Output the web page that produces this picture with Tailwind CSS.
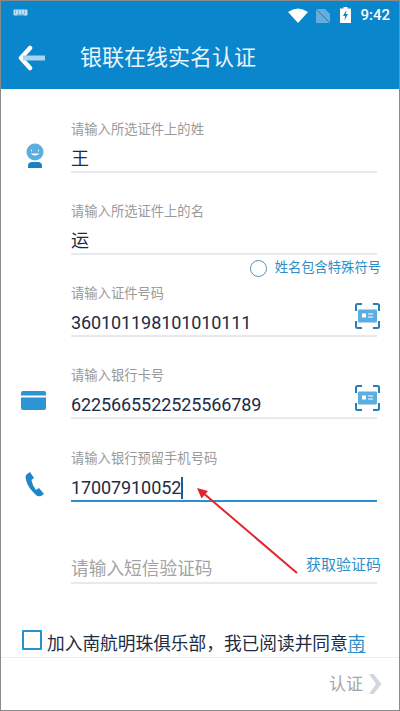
<!DOCTYPE html>
<html lang="zh">
<head>
  <meta charset="UTF-8" />
  <title>银联在线实名认证</title>
  <script src="https://cdn.jsdelivr.net/npm/@tailwindcss/browser@4"></script>
</head>
<body class="m-0 bg-white">
  <div class="relative w-[400px] h-[711px] overflow-hidden flex flex-col border border-[#8a8a8a] bg-white font-['Roboto','Noto_Sans_CJK_SC',sans-serif]">

    <!-- status bar + title -->
    <div class="h-[88px] shrink-0 bg-[#0a86cc] text-white">
      <div class="h-[28px] flex items-center pl-[12px] pr-[9px]">
        <svg width="16" height="8" viewBox="0 0 16 8" class="mt-[-4px]"><rect x="0.5" y="0.5" width="14" height="6" rx="1" fill="#bfe0f3"/><path d="M2 2h1M5 2h1M8 2h1M11 2h1M2 4h1M5 4h1M8 4h1M11 4h1M4 6h7" stroke="#0a86cc" stroke-width="0.8"/></svg>
        <div class="flex-1"></div>
        <svg width="20" height="15" viewBox="0 0 20 15"><path d="M0 4Q10 -3 20 4L10 15Z" fill="#fff"/></svg>
        <svg width="14" height="15" viewBox="0 0 14 15" class="ml-[8px]"><path d="M0 1h9l5 5v9H0Z" fill="#63aedd"/><path d="M0 1l14 14" stroke="#0a86cc" stroke-width="1"/></svg>
        <svg width="11" height="16" viewBox="0 0 11 16" class="ml-[10px]"><path d="M3.500 0h4v1.500H11V16H0V1.500h3.500Z" fill="#fff"/><path d="M6.500 3L3 9h2.200L4.500 13.500 8 7H5.800Z" fill="#0a86cc"/></svg>
        <span class="ml-[9px] text-[15px] font-medium leading-none">9:42</span>
      </div>
      <div class="h-[60px] flex items-center">
        <svg width="28" height="26" viewBox="0 0 28 26" class="ml-[17px] mt-[-3px]"><path d="M12 3L3 13l9 10" fill="none" stroke="#fff" stroke-width="4.500" stroke-linecap="round" stroke-linejoin="round"/><path d="M5 13h22" stroke="#a9d3ee" stroke-width="5"/></svg>
        <span class="ml-[34px] mt-[-2px] text-[22px] leading-none text-[#eaf5fc]">银联在线实名认证</span>
      </div>
    </div>

    <!-- form -->
    <div class="flex-1 pl-[70px] pr-[22px] pt-[2px] text-[#1c2c44]">
      <div class="h-[82px] flex flex-col justify-end border-b-2 border-[#e6e9ed] relative">
        <svg width="20" height="26" viewBox="0 0 20 26" class="absolute left-[-46px] top-[52px]"><circle cx="10" cy="9" r="8.500" fill="#5aaee0"/><path d="M6 7.500h1M13 7.500h1" stroke="#fff" stroke-width="1.500"/><path d="M5.500 10.500q4.500 4 9 0" fill="#fff"/><path d="M3 23q0-4 4-4h6q4 0 4 4v2H3Z" fill="#1a82c4"/></svg>
        <p class="text-[13.3px] leading-[18px] text-[#9a9a9a]">请输入所选证件上的姓</p>
        <p class="mt-[8px] text-[18px] leading-[24px]">王</p>
      </div>
      <div class="h-[82px] flex flex-col justify-end border-b-2 border-[#e6e9ed]">
        <p class="text-[13.3px] leading-[18px] text-[#9a9a9a]">请输入所选证件上的名</p>
        <p class="mt-[8px] text-[18px] leading-[24px]">运</p>
      </div>
      <div class="h-[82px] flex flex-col justify-end border-b-2 border-[#e6e9ed] relative">
        <div class="absolute right-[-4px] top-[4px] flex items-center gap-[8px]">
          <span class="w-[17px] h-[17px] rounded-full border border-[#4d93b8]"></span>
          <span class="text-[13.3px] leading-[18px] text-[#2c8fc9]">姓名包含特殊符号</span>
        </div>
        <svg width="25" height="26" viewBox="0 0 25 26" class="absolute right-[-3px] top-[48px]"><path d="M1 8V2.500Q1 1 2.500 1H7M18 1h4.500Q24 1 24 2.500V8M1 18v5.500Q1 25 2.500 25H7M18 25h4.500q1.500 0 1.500-1.500V18" fill="none" stroke="#2580b8" stroke-width="2"/><rect x="3" y="6.500" width="19" height="13" rx="1" fill="#5aaee0"/><rect x="7" y="10.500" width="4" height="4" fill="#fff"/><path d="M13 11h5M13 14h5" stroke="#fff" stroke-width="1.200"/></svg>
        <p class="text-[13.3px] leading-[18px] text-[#9a9a9a]">请输入证件号码</p>
        <p class="mt-[8px] text-[18px] leading-[24px] tracking-[-0.1px]">360101198101010111</p>
      </div>
      <div class="h-[82px] flex flex-col justify-end border-b-2 border-[#e6e9ed] relative">
        <svg width="25" height="20" viewBox="0 0 25 20" class="absolute left-[-50px] top-[54px]"><rect width="25" height="19" rx="2" fill="#2d94d6"/><rect y="4.500" width="25" height="2" fill="#fff"/></svg>
        <svg width="25" height="26" viewBox="0 0 25 26" class="absolute right-[-3px] top-[48px]"><path d="M1 8V2.500Q1 1 2.500 1H7M18 1h4.500Q24 1 24 2.500V8M1 18v5.500Q1 25 2.500 25H7M18 25h4.500q1.500 0 1.500-1.500V18" fill="none" stroke="#2580b8" stroke-width="2"/><rect x="3" y="6.500" width="19" height="13" rx="1" fill="#5aaee0"/><rect x="7" y="10.500" width="4" height="4" fill="#fff"/><path d="M13 11h5M13 14h5" stroke="#fff" stroke-width="1.200"/></svg>
        <p class="text-[13.3px] leading-[18px] text-[#9a9a9a]">请输入银行卡号</p>
        <p class="mt-[8px] text-[18px] leading-[24px] tracking-[-0.1px]">6225665522525566789</p>
      </div>
      <div class="h-[83px] flex flex-col justify-end border-b-2 border-[#2a8fd0] relative">
        <svg width="20" height="26" viewBox="0 0 20 26" class="absolute left-[-46px] top-[52px]"><path d="M5 1L1.500 3.500Q0 5 1 9q2 8 10 15 2 2 5 1l3-2-5-6-3 2Q7 14 6.500 9l2.500-2Z" fill="#1f87c8"/></svg>
        <p class="text-[13.3px] leading-[18px] text-[#9a9a9a]">请输入银行预留手机号码</p>
        <p class="mt-[8px] text-[18px] leading-[24px] tracking-[-0.1px]">17007910052<span class="inline-block w-[1.500px] h-[22px] bg-[#1c5f96] align-[-5px]"></span></p>
      </div>
      <div class="h-[82px] flex flex-col justify-end border-b-2 border-[#e6e9ed] relative">
        <span class="absolute right-[-4px] top-[53px] text-[15px] leading-[20px] text-[#2c8fc9]">获取验证码</span>
        <p class="text-[17.7px] leading-[26px] text-[#a3a3a3]">请输入短信验证码</p>
      </div>
    </div>

    <!-- agreement -->
    <div class="h-[72px] shrink-0 flex items-end pl-[21px] text-[#1c2c44]">
      <div class="h-[27px] flex items-start">
        <span class="w-[20px] h-[20px] border-2 border-[#2a8fd0] rounded-[1px]"></span>
        <span class="ml-[5px] mt-[2px] text-[17.7px] leading-[24px] whitespace-nowrap">加入南航明珠俱乐部，我已阅读并同意<span class="text-[#2c8fc9] underline underline-offset-[2px]">南</span></span>
      </div>
    </div>

    <!-- bottom bar -->
    <div class="h-[53px] shrink-0 border-t border-[#ececec] flex items-center justify-end pr-[17px] bg-white">
      <span class="text-[17px] leading-[24px] text-[#a6a6a6]">认证</span>
      <svg width="14" height="20" viewBox="0 0 14 20" class="ml-[5px]"><path d="M1 0h4.500L13.500 10l-8 10H1l7-10Z" fill="#cfd8e0"/></svg>
    </div>

    <!-- red arrow over the phone number -->
    <svg width="140" height="120" viewBox="0 0 140 120" class="absolute left-[179px] top-[479px]"><path d="M117 93L22 12" stroke="#e0252d" stroke-width="2"/><path d="M17 8L28 11 21.500 18.500Z" fill="#e0252d"/></svg>
  </div>
</body>
</html>
